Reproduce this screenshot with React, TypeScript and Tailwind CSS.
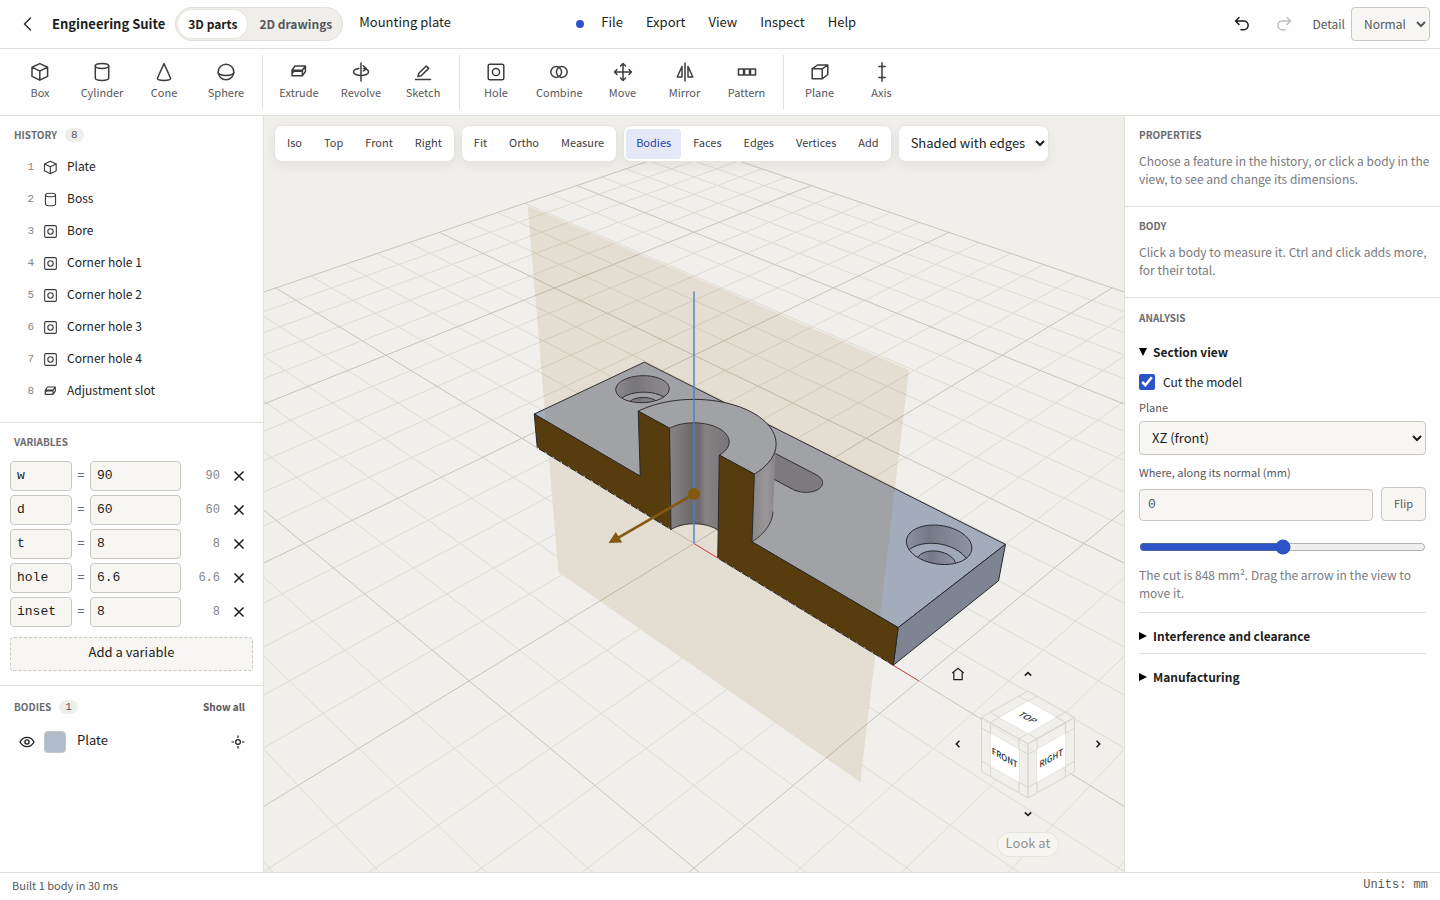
import type { ReactNode } from "react";

/* ---------- icons ---------- */

const ICONS: Record<string, ReactNode> = {
  box: <path d="M9.8 1.6 17.6 5.2v9.2L9.8 18.2 2 14.4V5.2zM2 5.2l7.8 3.9 7.8-3.9M9.8 9.1v9.1" />,
  cylinder: (
    <>
      <ellipse cx="10" cy="4" rx="6.7" ry="2.4" />
      <path d="M3.3 4v12c0 1.3 3 2.4 6.7 2.4s6.7-1.1 6.7-2.4V4" />
    </>
  ),
  cone: <path d="M10 1.6 3.4 16.2c0 1.3 3 2.2 6.6 2.2s6.6-.9 6.6-2.2z" />,
  sphere: (
    <>
      <circle cx="10" cy="10" r="7.8" />
      <path d="M2.2 10.6c0 1.7 3.5 3 7.8 3s7.8-1.3 7.8-3" />
    </>
  ),
  extrude: <path d="M3 8.2 6 4h10.4l-3 4.2zM3 8.2v5.6h10.4V8.2M13.4 13.8l3-4.2V4M3 11.6l2-2.4h8" />,
  revolve: (
    <>
      <path d="M10 1v18" />
      <path d="M12.5 6.6c3 .4 5 1.7 5 3.4 0 2-3.4 3.6-7.5 3.6S2.5 12 2.5 10s2.5-3.2 5.5-3.6" />
      <path d="m12.2 3.8 3.2 2.8-3 2.4" />
    </>
  ),
  sketch: <path d="M2.5 17.5h15M5 14.500l.8-3.300L13.300 4l2.400 2.400-7.500 7.300z" />,
  hole: (
    <>
      <rect x="2.2" y="2.2" width="15.6" height="15.6" rx="1.6" />
      <circle cx="10" cy="10" r="3.6" />
    </>
  ),
  combine: (
    <>
      <circle cx="7.2" cy="10" r="5.4" />
      <circle cx="12.8" cy="10" r="5.4" />
    </>
  ),
  move: <path d="M10 1.5v17M1.5 10h17M7.5 4 10 1.5 12.5 4M7.5 16l2.5 2.5 2.5-2.5M4 7.5 1.5 10 4 12.5M16 7.5l2.5 2.5-2.5 2.5" />,
  mirror: <path d="M10 1v18M7 4.5V15H2.2zM13 4.5V15h4.8z" />,
  pattern: (
    <>
      <rect x="1.5" y="7" width="5" height="6" />
      <rect x="7.5" y="7" width="5" height="6" />
      <rect x="13.5" y="7" width="5" height="6" />
    </>
  ),
  plane: <path d="M2.2 6.8h10v10h-10zM2.2 6.8 7.5 3h10.3l-5.6 3.8M17.8 3v9.5l-5.6 4.3" />,
  axis: <path d="M10 .8v18.4M6.8 4.5h6.4M6.8 15.5h6.4" />,
};

function Icon({ name, className }: { name: string; className: string }) {
  return (
    <svg viewBox="0 0 20 20" className={className} fill="none" stroke="currentColor" strokeWidth="1.5" strokeLinejoin="round" strokeLinecap="round" aria-hidden="true">
      {ICONS[name]}
    </svg>
  );
}

/* ---------- 3D projection ---------- */

const FOCAL = 1199;
const DIST = 211.1;
const TARGET_Z = 11;
const SIN = 0.57735;
const COS = 0.8165;

type V3 = [number, number, number];

function project([x, y, z]: V3): [number, number] {
  const s = (x + y) / Math.SQRT2;
  const t = (x - y) / Math.SQRT2;
  const h = z - TARGET_Z;
  const depth = DIST - t * COS - h * SIN;
  return [(FOCAL * s) / depth, (FOCAL * (t * SIN - h * COS)) / depth];
}

const pts = (list: V3[]) => list.map((p) => project(p).map((n) => n.toFixed(2)).join(",")).join(" ");

function arc(cx: number, cy: number, r: number, z: number, from: number, to: number): V3[] {
  const out: V3[] = [];
  const n = 40;
  for (let i = 0; i <= n; i++) {
    const a = ((from + ((to - from) * i) / n) * Math.PI) / 180;
    out.push([cx + r * Math.cos(a), cy + r * Math.sin(a), z]);
  }
  return out;
}

function gridLines(major: boolean): string {
  let d = "";
  for (let i = -15; i <= 15; i++) {
    if ((i % 5 === 0) !== major) continue;
    const v = i * 10;
    const pairs: V3[][] = [
      [[v, -150, 0], [v, 150, 0]],
      [[-150, v, 0], [150, v, 0]],
    ];
    for (const [a, b] of pairs) {
      const p = project(a);
      const q = project(b);
      d += `M${p[0].toFixed(1)} ${p[1].toFixed(1)}L${q[0].toFixed(1)} ${q[1].toFixed(1)}`;
    }
  }
  return d;
}

const H = 41.4;
const BORE_WALL = [...arc(0, 0, 6, 22, 180, 40), ...arc(0, 0, 6, 0, 40, 180)];
const BOSS_TOP = [...arc(0, 0, 14, 22, 0, 180), ...arc(0, 0, 6, 22, 180, 0)];
const BOSS_SIDE = [...arc(0, 0, 14, 22, 0, 40.3), ...arc(0, 0, 14, 8, 40.3, 0)];
const SLOT = [...arc(8.6, 20, 3.3, 8, -90, 90), ...arc(-8.6, 20, 3.3, 8, 90, 270)];
const CAP_LEFT: V3[] = [[-45, 0, 0], [-6, 0, 0], [-6, 0, 22], [-14, 0, 22], [-14, 0, 8], [-45, 0, 8]];
const CAP_RIGHT: V3[] = [[6, 0, 0], [45, 0, 0], [45, 0, 8], [14, 0, 8], [14, 0, 22], [6, 0, 22]];

function Counterbore({ x, id }: { x: number; id: string }) {
  const rim = pts(arc(x, 22, 5.5, 8, 0, 360));
  return (
    <g>
      <clipPath id={id}>
        <polygon points={rim} />
      </clipPath>
      <g clipPath={`url(#${id})`}>
        <polygon points={rim} fill="url(#wall)" />
        <polygon points={pts(arc(x, 22, 5.5, 4, 0, 360))} fill="#a0a9b7" stroke="#26282c" />
        <polygon points={pts(arc(x, 22, 3.3, 4, 0, 360))} fill="url(#wall)" stroke="#26282c" />
      </g>
      <polygon points={rim} fill="none" stroke="#26282c" />
    </g>
  );
}

function Model() {
  const origin = project([0, 0, 0]);
  const xEnd = project([50, 0, 0]);
  const zEnd = project([0, 0, 50]);
  return (
    <svg viewBox="-430 -378 860 756" preserveAspectRatio="xMidYMid slice" className="absolute inset-0 size-full" role="img" aria-label="Mounting plate, cut along XZ">
      <defs>
        <linearGradient id="wall" x1="0" x2="1" y1="0" y2="0">
          <stop offset="0" stopColor="#8b91a0" />
          <stop offset="0.35" stopColor="#737986" />
          <stop offset="0.6" stopColor="#7e8491" />
          <stop offset="1" stopColor="#8d93a2" />
        </linearGradient>
        <linearGradient id="bore" x1="0" x2="1" y1="0" y2="0">
          <stop offset="0" stopColor="#868b97" />
          <stop offset="0.35" stopColor="#696d79" />
          <stop offset="0.5" stopColor="#6b6f7b" />
          <stop offset="0.6" stopColor="#838793" />
          <stop offset="1" stopColor="#757986" />
        </linearGradient>
        <linearGradient id="boss" x1="0" x2="1" y1="0" y2="0">
          <stop offset="0" stopColor="#868c98" />
          <stop offset="0.6" stopColor="#9ba0ab" />
          <stop offset="1" stopColor="#848996" />
        </linearGradient>
      </defs>
      <path d={gridLines(false)} stroke="#dedbd2" fill="none" />
      <polygon points={pts([[-H, 0, 0], [H, 0, 0], [H, 0, TARGET_Z - H], [-H, 0, TARGET_Z - H]])} fill="#f0efeb" />
      <path d={gridLines(true)} stroke="#c6c3b9" fill="none" />

      <g stroke="#26282c" strokeLinejoin="round">
        <polygon points={pts([[-45, 0, 8], [45, 0, 8], [45, 30, 8], [-45, 30, 8]])} fill="#a2acba" />
        <polygon points={pts([[45, 0, 0], [45, 30, 0], [45, 30, 8], [45, 0, 8]])} fill="#7e8492" />
        <polygon points={pts(SLOT)} fill="#7a7f8b" />
      </g>
      <Counterbore x={-37} id="cb-left" />
      <Counterbore x={37} id="cb-right" />
      <g stroke="#26282c" strokeLinejoin="round">
        <polygon points={pts(BOSS_SIDE)} fill="url(#boss)" stroke="none" />
        <polyline points={pts(arc(0, 0, 14, 8, 0, 40.3))} fill="none" />
        <polygon points={pts(BORE_WALL)} fill="url(#bore)" stroke="none" />
        <polyline points={pts(arc(0, 0, 6, 0, 180, 40))} fill="none" />
        <polygon points={pts(BOSS_TOP)} fill="#a2acba" />
      </g>

      <polygon points={pts([[-H, 0, TARGET_Z - H], [H, 0, TARGET_Z - H], [H, 0, TARGET_Z + H], [-H, 0, TARGET_Z + H]])} fill="#985c16" fillOpacity="0.12" />

      <g fill="#573d0e" stroke="#26282c" strokeLinejoin="round">
        <polygon points={pts(CAP_LEFT)} />
        <polygon points={pts(CAP_RIGHT)} />
      </g>
      <polyline points={pts([[-45, 0, 0], [-6, 0, 0]])} stroke="#d8d2c4" strokeDasharray="2 7" fill="none" />
      <polyline points={pts([[6, 0, 0], [45, 0, 0]])} stroke="#cf9a90" strokeDasharray="2 7" fill="none" />
      <polyline points={pts([[0, 0, 0], [6, 0, 0]])} stroke="#d9434a" fill="none" />
      <path d={`M${project([45, 0, 0]).join(" ")}L${xEnd.join(" ")}`} stroke="#d9434a" />
      <path d={`M${origin.join(" ")}L${zEnd.join(" ")}`} stroke="#4a80c4" strokeWidth="1.4" />
      <path d="M0 0-76 43.8" stroke="#84590f" strokeWidth="2.6" />
      <path d="M-85.5 49-78.2 38-71.8 48.6z" fill="#84590f" />
      <circle r="6" fill="#84590f" />
    </svg>
  );
}

/* ---------- view cube ---------- */

const FACES = [
  { m: "matrix(0.866 0.49 0 1 -46.5 -26.5)", label: "FRONT" },
  { m: "matrix(0.866 -0.49 0 1 0 0)", label: "RIGHT" },
  { m: "matrix(0.866 0.49 -0.866 0.49 0 -53)", label: "TOP" },
];

function ViewCube() {
  return (
    <svg viewBox="-60 -60 120 120" className="size-full" role="img" aria-label="View cube">
      {FACES.map((f) => (
        <g key={f.label} transform={f.m}>
          <rect width="53.7" height="54" fill="#f0efeb" fillOpacity="0.7" stroke="#d3d1c9" strokeWidth="0.8" />
          <path d="M10.5 0v54M43.2 0v54M0 10.5h53.7M0 43.5h53.7" stroke="#d3d1c9" strokeWidth="0.8" />
          <rect x="10.5" y="10.5" width="32.7" height="33" fill="#fff" />
          <text x="26.8" y="30.5" textAnchor="middle" className="fill-[#2f3034] text-[9px] font-medium">
            {f.label}
          </text>
        </g>
      ))}
    </svg>
  );
}

function Chevron({ d }: { d: string }) {
  return (
    <svg viewBox="0 0 12 12" className="size-3" fill="none" stroke="#1c1d20" strokeWidth="1.6" aria-hidden="true">
      <path d={d} />
    </svg>
  );
}

function ViewNav() {
  const cell = "flex items-center justify-center";
  return (
    <div className="absolute right-4 bottom-[15px] flex flex-col items-center gap-2">
      <div className="grid grid-cols-[20px_120px_20px] grid-rows-[20px_120px_20px]">
        <button className={cell} aria-label="Home view">
          <svg viewBox="0 0 14 14" className="size-3.5" fill="none" stroke="#1c1d20" strokeWidth="1.2" aria-hidden="true">
            <path d="M1.3 6 7 1.2 12.7 6M2.8 5v7.700h8.400V5" />
          </svg>
        </button>
        <button className={cell} aria-label="Rotate up"><Chevron d="M2.8 7.6 6 4.6l3.2 3" /></button>
        <span />
        <button className={cell} aria-label="Rotate left"><Chevron d="M7.4 2.8 4.4 6l3 3.2" /></button>
        <ViewCube />
        <button className={cell} aria-label="Rotate right"><Chevron d="M4.6 2.8 7.6 6l-3 3.2" /></button>
        <span />
        <button className={cell} aria-label="Rotate down"><Chevron d="M2.8 4.4 6 7.4l3.2-3" /></button>
        <span />
      </div>
      <button className="flex h-[25px] items-center rounded-full border border-[#e6e4de] bg-[#f6f5f2] px-2 pb-[3px] text-[13px] text-[#929290]" disabled>
        Look at
      </button>
    </div>
  );
}

/* ---------- header ---------- */

function Header() {
  return (
    <header className="flex h-[49px] shrink-0 items-center border-b border-[#e2e0db] pr-2.5 pl-5">
      <button aria-label="Back" className="flex size-4 items-center justify-center">
        <svg viewBox="0 0 16 16" className="size-4" fill="none" stroke="#1c1d20" strokeWidth="1.3" strokeLinecap="round" aria-hidden="true">
          <path d="M10.5 2 4.5 8l6 6" />
        </svg>
      </button>
      <h1 className="ml-4 text-[13px] font-bold">Engineering Suite</h1>
      <div className="ml-2.5 flex h-[34px] items-center rounded-full border border-[#e2e0db] bg-[#efeeea] p-0.5 text-[12px] font-bold">
        <button className="h-7 rounded-full bg-white px-2.5 shadow-[0_0_1px_1px_#e8e6e1]">3D parts</button>
        <button className="h-7 pr-2 pl-3 text-[#56575b]">2D drawings</button>
      </div>
      <span className="ml-4 w-[217px] pb-1 text-[13px]">Mounting plate</span>
      <span className="size-2 rounded-full bg-[#2c54c8]" />
      <nav className="ml-1.5 flex items-center gap-px pb-1 text-[13px]">
        {["File", "Export", "View", "Inspect", "Help"].map((m) => (
          <button key={m} className="px-[11px]">{m}</button>
        ))}
      </nav>
      <div className="ml-auto flex items-center">
        <button aria-label="Undo" className="text-[#1c1d20]">
          <svg viewBox="0 0 18 18" className="size-[18px]" fill="none" stroke="currentColor" strokeWidth="1.5" strokeLinecap="round" strokeLinejoin="round" aria-hidden="true">
            <path d="M6 2.5 2.5 6 6 9.5M2.5 6h8.3a4.2 4.2 0 0 1 0 8.7H8" />
          </svg>
        </button>
        <button aria-label="Redo" disabled className="ml-6 text-[#bdbdbb]">
          <svg viewBox="0 0 18 18" className="size-[18px]" fill="none" stroke="currentColor" strokeWidth="1.5" strokeLinecap="round" strokeLinejoin="round" aria-hidden="true">
            <path d="M12 2.5 15.5 6 12 9.5M15.5 6H7.2a4.2 4.2 0 0 0 0 8.7H10" />
          </svg>
        </button>
        <label htmlFor="detail" className="ml-5 text-[12px] text-[#56575b]">Detail</label>
        <select id="detail" className="ml-1.5 h-[34px] w-[79px] rounded border border-[#c9c7c1] bg-[#f7f6f3] px-2 pb-0.5 text-[12px] text-[#56575b]">
          <option>Normal</option>
        </select>
      </div>
    </header>
  );
}

const TOOLS = [
  [["box", "Box"], ["cylinder", "Cylinder"], ["cone", "Cone"], ["sphere", "Sphere"]],
  [["extrude", "Extrude"], ["revolve", "Revolve"], ["sketch", "Sketch"]],
  [["hole", "Hole"], ["combine", "Combine"], ["move", "Move"], ["mirror", "Mirror"], ["pattern", "Pattern"]],
  [["plane", "Plane"], ["axis", "Axis"]],
];

function ToolBar() {
  return (
    <div className="flex h-[67px] shrink-0 border-b border-[#e2e0db] px-1 py-1.5">
      {TOOLS.map((group, i) => (
        <div key={i} className="flex gap-0.5 border-r border-[#e2e0db] px-1.5 last:border-0">
          {group.map(([icon, label]) => (
            <button key={label} className="flex min-w-[60px] flex-col items-center gap-px px-2 pt-[7px] text-[11px] leading-[18px] text-[#56575b]">
              <Icon name={icon} className="size-5 text-[#3c3d41]" />
              {label}
            </button>
          ))}
        </div>
      ))}
    </div>
  );
}

/* ---------- left panel ---------- */

const HISTORY = [
  ["box", "Plate"],
  ["cylinder", "Boss"],
  ["hole", "Bore"],
  ["hole", "Corner hole 1"],
  ["hole", "Corner hole 2"],
  ["hole", "Corner hole 3"],
  ["hole", "Corner hole 4"],
  ["extrude", "Adjustment slot"],
];

const VARIABLES = [["w", "90"], ["d", "60"], ["t", "8"], ["hole", "6.6"], ["inset", "8"]];

const mono = "font-['Liberation_Mono',monospace]";
const heading = "text-[10px] leading-4 font-bold text-[#6b6c70] uppercase";
const badge = "rounded-full bg-[#efeeea] px-1.5 text-[11px] leading-[14px] text-[#56575b] font-['Liberation_Mono',monospace]";

function LeftPanel() {
  return (
    <aside className="w-[264px] shrink-0 border-r border-[#e2e0db]">
      <section className="border-b border-[#e2e0db] pt-[11px] pb-[15px]">
        <div className="flex items-center gap-2 px-3.5">
          <h2 className={heading}>History</h2>
          <span className={badge}>8</span>
        </div>
        <ol className="mt-2">
          {HISTORY.map(([icon, label], i) => (
            <li key={label} className="flex h-8 items-center">
              <span className={`w-[34px] text-right text-[11px] text-[#85868a] ${mono}`}>{i + 1}</span>
              <Icon name={icon} className="ml-[9px] size-[15px] text-[#3c3d41]" />
              <span className="ml-[9px] pb-0.5 text-[12px]">{label}</span>
            </li>
          ))}
        </ol>
      </section>
      <section className="border-b border-[#e2e0db] px-2.5 pt-[11px] pb-3.5">
        <h2 className={`ml-1 ${heading}`}>Variables</h2>
        <div className="mt-[11px] flex flex-col gap-1">
          {VARIABLES.map(([name, value]) => (
            <div key={name} className={`flex items-center text-[13px] ${mono}`}>
              <input aria-label={`Name of ${name}`} defaultValue={name} className="h-[30px] w-[62px] rounded border border-[#c9c7c1] bg-[#f7f6f3] px-1.5 pb-0.5" />
              <span className="w-[18px] text-center text-[#6b6c70]">=</span>
              <input aria-label={`Value of ${name}`} defaultValue={value} className="h-[30px] w-[91px] rounded border border-[#c9c7c1] bg-[#f7f6f3] px-1.5 pb-0.5" />
              <span className="w-[39px] text-right text-[12px] text-[#85868a]">{value}</span>
              <button aria-label={`Remove ${name}`} className="ml-3 flex size-3.5 items-center justify-center">
                <svg viewBox="0 0 14 14" className="size-3.5" stroke="#1c1d20" strokeWidth="1.5" aria-hidden="true">
                  <path d="m2.5 2.5 9 9M11.5 2.5l-9 9" />
                </svg>
              </button>
            </div>
          ))}
        </div>
        <button className="mt-2.5 flex h-[34px] w-full items-center justify-center rounded border border-dashed border-[#c9c7c1] bg-[#f7f6f3] pb-1 text-[13px]">
          Add a variable
        </button>
      </section>
      <section className="pt-[13px]">
        <div className="flex items-center gap-2 pr-[18px] pl-3.5">
          <h2 className={heading}>Bodies</h2>
          <span className={badge}>1</span>
          <button className="ml-auto text-[10px] leading-4 font-bold text-[#56575b]">Show all</button>
        </div>
        <div className="mt-4 flex h-[22px] items-center pr-[18px] pl-[19px]">
          <button aria-label="Hide Plate">
            <svg viewBox="0 0 16 16" className="size-4" fill="none" stroke="#1c1d20" strokeWidth="1.3" aria-hidden="true">
              <path d="M1 8c1.6-3 4-4.6 7-4.6S13.4 5 15 8c-1.6 3-4 4.6-7 4.6S2.6 11 1 8z" />
              <circle cx="8" cy="8" r="2.1" />
            </svg>
          </button>
          <span className="ml-[9px] size-[22px] rounded border border-[#c9c7c1] bg-[#b0bccb]" />
          <span className="ml-[11px] pb-1 text-[13px]">Plate</span>
          <button aria-label="Centre on Plate" className="ml-auto">
            <svg viewBox="0 0 14 14" className="size-3.5" fill="none" stroke="#1c1d20" strokeWidth="1.2" aria-hidden="true">
              <circle cx="7" cy="7" r="2.4" />
              <path d="M7 .5v2.6M7 10.9v2.6M.5 7h2.6M10.9 7h2.6" />
            </svg>
          </button>
        </div>
      </section>
    </aside>
  );
}

/* ---------- viewport ---------- */

const VIEW_GROUPS = [
  ["Iso", "Top", "Front", "Right"],
  ["Fit", "Ortho", "Measure"],
  ["Bodies", "Faces", "Edges", "Vertices", "Add"],
];

function Viewport() {
  const card = "flex h-[37px] items-center gap-0.5 rounded-lg border border-[#e6e4de] bg-white shadow-[0_4px_12px_rgba(0,0,0,0.06)]";
  return (
    <main className="relative min-w-0 flex-1 overflow-hidden bg-[#f0efeb]">
      <Model />
      <div className="relative flex flex-wrap gap-1.5 px-2.5 pt-[9px]">
        {VIEW_GROUPS.map((g) => (
          <div key={g[0]} className={`${card} px-0.5`}>
            {g.map((b) => (
              <button key={b} className={`h-[30px] rounded px-2.5 pb-0.5 text-[11px] ${b === "Bodies" ? "bg-[#e4e8f7] text-[#1f3fae]" : "text-[#3c3d41]"}`}>
                {b}
              </button>
            ))}
          </div>
        ))}
        <div className={card}>
          <select aria-label="Display style" className="h-full rounded-lg bg-white pr-1.5 pb-0.5 pl-2 text-[13px]">
            <option>Shaded with edges</option>
          </select>
        </div>
      </div>
      <ViewNav />
    </main>
  );
}

/* ---------- right panel ---------- */

function RightPanel() {
  const para = "-mr-2 text-[12px] leading-[18px] text-[#7a7b7f]";
  const section = "border-b border-[#e2e0db] px-3.5 pt-[11px] pb-[18px]";
  const label = "block text-[11px] leading-[18px] text-[#56575b]";
  const summary = "flex cursor-pointer list-none items-center gap-1.5 text-[12px] leading-5 font-bold";
  return (
    <aside className="w-[316px] shrink-0 border-l border-[#e2e0db]">
      <section className={section}>
        <h2 className={heading}>Properties</h2>
        <p className={`mt-[9px] ${para}`}>Choose a feature in the history, or click a body in the view, to see and change its dimensions.</p>
      </section>
      <section className={section}>
        <h2 className={heading}>Body</h2>
        <p className={`mt-[9px] ${para}`}>Click a body to measure it. Ctrl and click adds more, for their total.</p>
      </section>
      <section className="px-3.5 pt-3">
        <h2 className={heading}>Analysis</h2>
        <details open className="mt-4 pb-2.5">
          <summary className={summary}>
            <svg viewBox="0 0 8 8" className="size-2" aria-hidden="true"><path d="M0 0h8L4 8z" /></svg>
            Section view
          </summary>
          <label className="mt-2.5 flex h-5 items-center gap-2 text-[12px]">
            <input type="checkbox" defaultChecked className="size-4 accent-[#2c54c8]" />
            Cut the model
          </label>
          <label htmlFor="plane" className={`mt-1.5 ${label}`}>Plane</label>
          <select id="plane" className="mt-[5px] h-[34px] w-full rounded border border-[#c9c7c1] bg-[#f7f6f3] px-2 pb-0.5 text-[13px]">
            <option>XZ (front)</option>
          </select>
          <label htmlFor="offset" className={`mt-2 ${label}`}>Where, along its normal (mm)</label>
          <div className="mt-1.5 flex items-end gap-2">
            <input id="offset" defaultValue="0" className={`h-8 min-w-0 flex-1 rounded border border-[#c9c7c1] bg-[#f7f6f3] px-2 pb-0.5 text-[13px] text-[#56575b] ${mono}`} />
            <button className="h-[34px] rounded border border-[#c9c7c1] bg-[#f7f6f3] px-3 pb-0.5 text-[11px] text-[#56575b]">Flip</button>
          </div>
          <input type="range" aria-label="Offset along the normal" min={-50} max={50} defaultValue={0} className="mt-[18px] block h-4 w-full accent-[#2c54c8]" />
          <p className={`mt-[11px] ${para}`}>The cut is 848 mm². Drag the arrow in the view to move it.</p>
        </details>
        <details className="border-t border-[#e2e0db] pt-[13px] pb-[7px]">
          <summary className={summary}>
            <svg viewBox="0 0 8 8" className="size-2" aria-hidden="true"><path d="M0 0v8l8-4z" /></svg>
            Interference and clearance
          </summary>
        </details>
        <details className="border-t border-[#e2e0db] pt-[13px] pb-[7px]">
          <summary className={summary}>
            <svg viewBox="0 0 8 8" className="size-2" aria-hidden="true"><path d="M0 0v8l8-4z" /></svg>
            Manufacturing
          </summary>
        </details>
      </section>
    </aside>
  );
}

export default function App() {
  return (
    <div className="flex h-screen flex-col bg-[#fefefe] font-['Noto_Sans_CJK_SC',sans-serif] text-[#1c1d20]">
      <Header />
      <ToolBar />
      <div className="flex min-h-0 flex-1">
        <LeftPanel />
        <Viewport />
        <RightPanel />
      </div>
      <footer className="flex h-7 shrink-0 items-center justify-between border-t border-[#e2e0db] px-3 pb-[3px] text-[11px] text-[#56575b]">
        <span>Built 1 body in 30 ms</span>
        <span className={`text-[12px] ${mono}`}>Units: mm</span>
      </footer>
    </div>
  );
}
